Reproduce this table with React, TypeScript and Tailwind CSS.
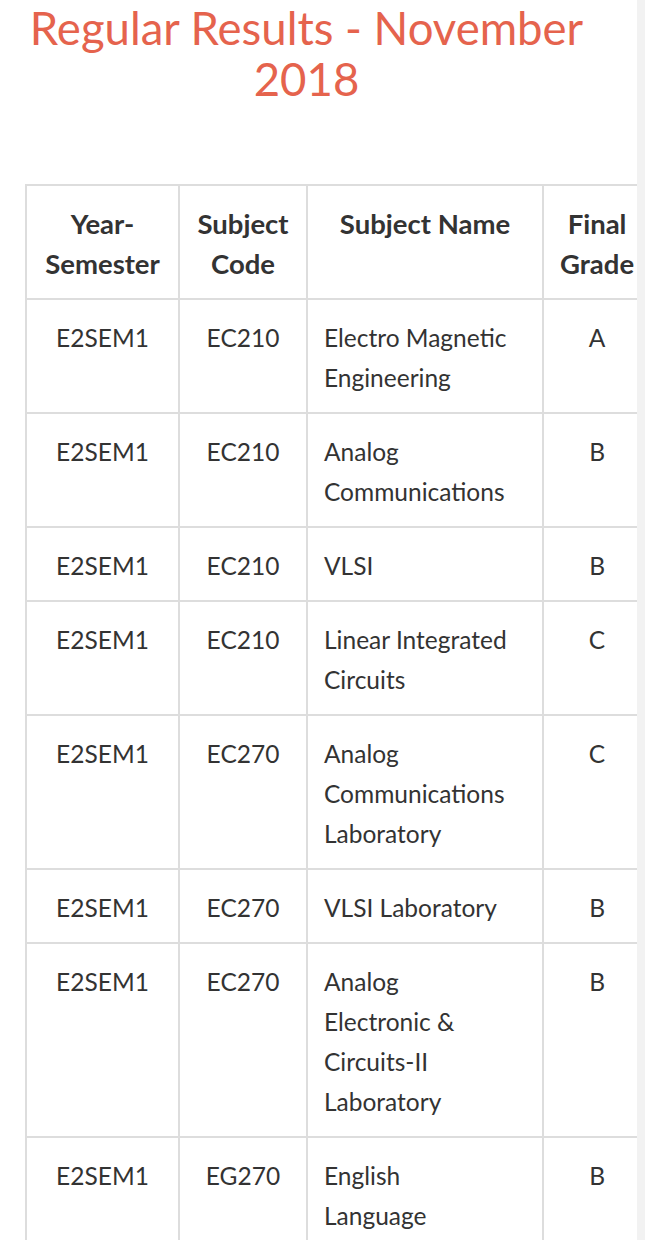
import React from "react";

type Row = { ys: string; code: string; name: string[]; grade: string };

const rows: Row[] = [
  { ys: "E2SEM1", code: "EC210", name: ["Electro Magnetic", "Engineering"], grade: "A" },
  { ys: "E2SEM1", code: "EC210", name: ["Analog", "Communications"], grade: "B" },
  { ys: "E2SEM1", code: "EC210", name: ["VLSI"], grade: "B" },
  { ys: "E2SEM1", code: "EC210", name: ["Linear Integrated", "Circuits"], grade: "C" },
  { ys: "E2SEM1", code: "EC270", name: ["Analog", "Communications", "Laboratory"], grade: "C" },
  { ys: "E2SEM1", code: "EC270", name: ["VLSI Laboratory"], grade: "B" },
  { ys: "E2SEM1", code: "EC270", name: ["Analog", "Electronic &", "Circuits-II", "Laboratory"], grade: "B" },
  { ys: "E2SEM1", code: "EG270", name: ["English", "Language"], grade: "B" },
];

const font = { fontFamily: "Lato, 'Open Sans', sans-serif" };

const th =
  "border-2 border-[#dddddd] px-[16px] pt-[18px] pb-[14px] align-top text-center font-bold whitespace-nowrap text-[27.5px]";
const td = "border-2 border-[#dddddd] px-[16px] pt-[18px] pb-[14px] align-top whitespace-nowrap";

export default function App() {
  return (
    <div className="flex w-[645px] h-[1240px] overflow-hidden bg-white" style={font}>
      <div className="w-[637px] h-[1240px] overflow-hidden">
        <h1 className="w-[613px] text-center text-[45.5px] leading-[51px] text-[#e5634d] font-normal whitespace-nowrap pt-[2px]">
          Regular Results - November
          <br />
          2018
        </h1>
        <div className="ml-[25px] mt-[80px] w-[700px]">
          <table className="border-collapse text-[24.5px] leading-[40px] text-[#333333]">
            <colgroup>
              <col className="w-[153px]" />
              <col className="w-[128px]" />
              <col className="w-[236px]" />
              <col className="w-[108px]" />
            </colgroup>
            <thead>
              <tr>
                <th className={th}>
                  Year-
                  <br />
                  Semester
                </th>
                <th className={th}>
                  Subject
                  <br />
                  Code
                </th>
                <th className={th}>Subject Name</th>
                <th className={th}>
                  Final
                  <br />
                  Grade
                </th>
              </tr>
            </thead>
            <tbody>
              {rows.map((r, i) => (
                <tr key={i}>
                  <td className={td + " text-center"}>{r.ys}</td>
                  <td className={td + " text-center"}>{r.code}</td>
                  <td className={td + " text-left"}>
                    {r.name.map((n, j) => (
                      <div key={j}>{n}</div>
                    ))}
                  </td>
                  <td className={td + " text-center"}>{r.grade}</td>
                </tr>
              ))}
            </tbody>
          </table>
        </div>
      </div>
      <div className="w-[8px] h-[1240px] bg-[#f2f2f2]" />
    </div>
  );
}
